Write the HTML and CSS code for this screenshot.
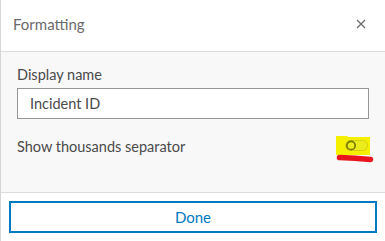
FILE: index.html
```html
<!DOCTYPE html>
<html lang="en">
<head>
    <meta charset="UTF-8">
    <meta name="viewport" content="width=device-width, initial-scale=1.0">
    <title>Formatting</title>
    <link rel="stylesheet" href="styles.css">
</head>
<body>
    <div class="panel">
        <div class="header">
            <span class="title">Formatting</span>
            <svg class="close" width="10" height="10" viewBox="0 0 10 10">
                <path d="M1 1 L9 9 M9 1 L1 9" stroke="#6a6a6a" stroke-width="1.2" fill="none"/>
            </svg>
        </div>
        <div class="content">
            <label class="label">Display name</label>
            <div class="input">Incident ID</div>
            <div class="row">
                <span>Show thousands separator</span>
                <svg class="toggle" width="40" height="30" viewBox="0 0 40 30">
                    <path d="M1 1 L12 1 L13 2 L35 2 L35 20 L1 20 Z" fill="#f5f000"/>
                    <rect x="10.5" y="5.5" width="22" height="10" rx="5" fill="#ecec1c" stroke="#d4d010" stroke-width="1"/>
                    <circle cx="16" cy="10.5" r="4.2" fill="none" stroke="#7a7a00" stroke-width="1.7"/>
                    <path d="M4.5 22.5 Q20 23 35.5 24.5" stroke="#e8161c" stroke-width="5.5" stroke-linecap="round" fill="none"/>
                </svg>
            </div>
        </div>
        <div class="footer">
            <button class="done">Done</button>
        </div>
    </div>
</body>
</html>
```
FILE: styles.css
```css
* {
    box-sizing: border-box;
    margin: 0;
    padding: 0;
}
body {
    font-family: Lato, "Open Sans", sans-serif;
    background-color: #fff;
}
.panel {
    width: 385px;
    height: 241px;
    border-left: 1px solid #d6d6d6;
    display: flex;
    flex-direction: column;
}
.header {
    height: 52px;
    padding: 0 19px 0 12px;
    display: flex;
    align-items: center;
    justify-content: space-between;
    border-bottom: 1px solid #dcdcdc;
    background-color: #fff;
}
.title {
    font-size: 15px;
    color: #6b6b6b;
    padding-bottom: 3px;
}
.close {
    margin-top: -3px;
}
.content {
    height: 141px;
    padding: 13px 15px 0 16px;
    background-color: #f8f8f8;
    border-bottom: 1px solid #dcdcdc;
}
.label {
    display: block;
    font-size: 14.5px;
    color: #4a4a4a;
    line-height: 20px;
}
.input {
    margin-top: 3px;
    width: 352px;
    height: 31px;
    border: 1px solid #959595;
    background-color: #fff;
    padding: 0 12px;
    font-size: 14.5px;
    color: #4a4a4a;
    line-height: 29px;
}
.row {
    margin-top: 19px;
    display: flex;
    justify-content: space-between;
    font-size: 14.5px;
    color: #4a4a4a;
}
.toggle {
    margin-top: -3px;
    margin-right: -5px;
}
.footer {
    padding: 8px 8px 8px 8px;
}
.done {
    width: 368px;
    height: 32px;
    border: 2px solid #007ac2;
    background-color: #fff;
    color: #007ac2;
    font-family: Lato, "Open Sans", sans-serif;
    font-size: 15px;
}
```
